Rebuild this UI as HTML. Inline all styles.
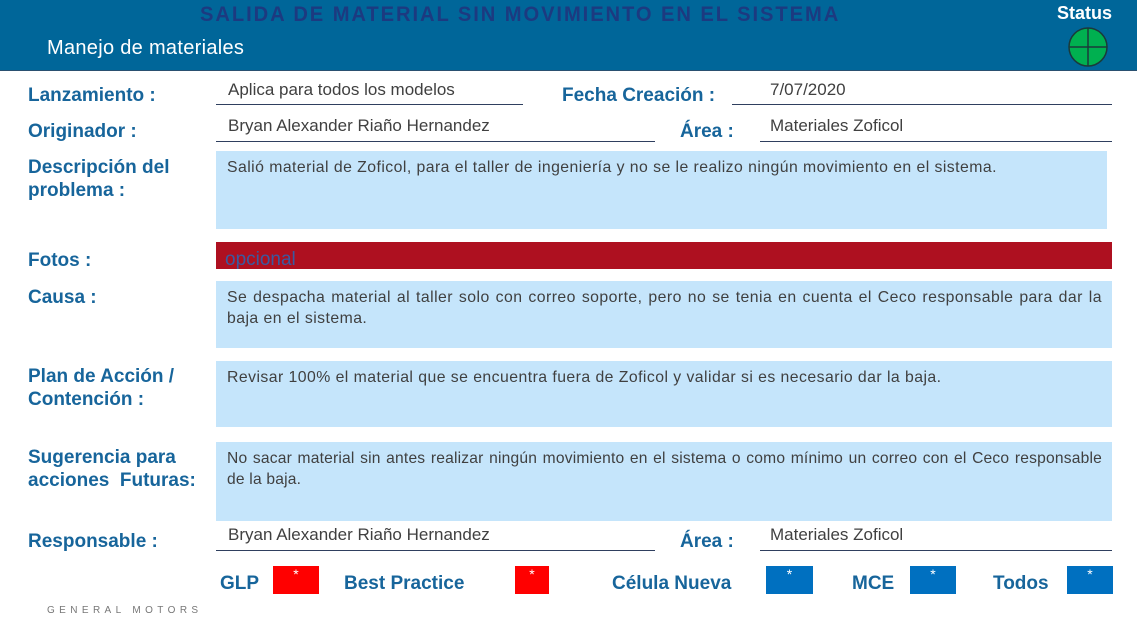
<!DOCTYPE html>
<html><head><meta charset="utf-8"><style>
body{margin:0;width:1137px;height:633px;background:#fff;position:relative;overflow:hidden;font-family:"Liberation Sans",Arial,sans-serif}
.a{position:absolute}
.hdr{left:0;top:0;width:1137px;height:70px;background:#006699;border-bottom:1px solid #2a5070}
.lb{position:absolute;color:#17659b;font-weight:bold;font-size:19px;line-height:23px}
.tx{position:absolute;color:#404040;font-size:17px}
.ln{position:absolute;height:1px;background:#2f3f5f}
.bx{position:absolute;background:#c5e5fb;color:#404040;font-size:15.8px;letter-spacing:0.45px;line-height:21px;padding:6px 10px 0 11px;box-sizing:border-box;text-align:justify}
.sq{position:absolute;color:#fff;font-size:14px;text-align:center;line-height:16px}
</style></head><body>
<div class="a hdr"></div>
<div class="a" style="left:200px;top:3px;font-size:21px;letter-spacing:2px;color:#1c3a80;font-weight:bold;transform:scaleX(0.96);transform-origin:left">SALIDA DE MATERIAL SIN MOVIMIENTO EN EL SISTEMA</div>
<div class="a" style="left:47px;top:37px;font-size:20px;letter-spacing:0.3px;color:#fff">Manejo de materiales</div>
<div class="a" style="left:1057px;top:3px;font-size:18px;color:#fff;font-weight:bold">Status</div>
<svg class="a" style="left:1067px;top:26px" width="42" height="42"><circle cx="21" cy="21" r="19" fill="#00b050" stroke="#1a3a3a" stroke-width="1.5"/><line x1="2" y1="21" x2="40" y2="21" stroke="#1a3a3a" stroke-width="1.5"/><line x1="21" y1="2" x2="21" y2="40" stroke="#1a3a3a" stroke-width="1.5"/></svg>

<div class="lb" style="left:28px;top:84px">Lanzamiento :</div>
<div class="tx" style="left:228px;top:80px">Aplica para todos los modelos</div>
<div class="ln" style="left:216px;top:104px;width:307px"></div>
<div class="lb" style="left:562px;top:84px">Fecha Creación :</div>
<div class="tx" style="left:770px;top:80px">7/07/2020</div>
<div class="ln" style="left:732px;top:104px;width:380px"></div>

<div class="lb" style="left:28px;top:120px">Originador :</div>
<div class="tx" style="left:228px;top:116px">Bryan Alexander Riaño Hernandez</div>
<div class="ln" style="left:216px;top:141px;width:439px"></div>
<div class="lb" style="left:680px;top:120px">Área :</div>
<div class="tx" style="left:770px;top:116px">Materiales Zoficol</div>
<div class="ln" style="left:760px;top:141px;width:352px"></div>

<div class="lb" style="left:28px;top:156px">Descripción del<br>problema :</div>
<div class="bx" style="left:216px;top:151px;width:891px;height:78px">Salió material de Zoficol, para el taller de ingeniería y no se le realizo ningún movimiento en el sistema.</div>

<div class="lb" style="left:28px;top:249px">Fotos :</div>
<div class="a" style="left:216px;top:242px;width:896px;height:27px;background:#ae1020"></div>
<div class="a" style="left:225px;top:249px;font-size:19px;color:#3a5aa0">opcional</div>

<div class="lb" style="left:28px;top:286px">Causa :</div>
<div class="bx" style="left:216px;top:281px;width:896px;height:67px">Se despacha material al taller solo con correo soporte, pero no se tenia en cuenta el Ceco responsable para dar la baja en el sistema.</div>

<div class="lb" style="left:28px;top:365px">Plan de Acción /<br>Contención :</div>
<div class="bx" style="left:216px;top:361px;width:896px;height:66px">Revisar 100% el material que se encuentra fuera de Zoficol y validar si es necesario dar la baja.</div>

<div class="lb" style="left:28px;top:446px">Sugerencia para<br>acciones&nbsp; Futuras:</div>
<div class="bx" style="left:216px;top:442px;width:896px;height:79px;letter-spacing:0.2px;font-size:15.6px">No sacar material sin antes realizar ningún movimiento en el sistema o como mínimo un correo con el Ceco responsable de la baja.</div>

<div class="lb" style="left:28px;top:530px">Responsable :</div>
<div class="tx" style="left:228px;top:525px">Bryan Alexander Riaño Hernandez</div>
<div class="ln" style="left:216px;top:550px;width:439px"></div>
<div class="lb" style="left:680px;top:530px">Área :</div>
<div class="tx" style="left:770px;top:525px">Materiales Zoficol</div>
<div class="ln" style="left:760px;top:550px;width:352px"></div>

<div class="lb" style="left:220px;top:572px">GLP</div>
<div class="sq" style="left:273px;top:566px;width:46px;height:28px;background:#f00">*</div>
<div class="lb" style="left:344px;top:572px">Best Practice</div>
<div class="sq" style="left:515px;top:566px;width:34px;height:28px;background:#f00">*</div>
<div class="lb" style="left:612px;top:572px">Célula Nueva</div>
<div class="sq" style="left:766px;top:566px;width:47px;height:28px;background:#0070c0">*</div>
<div class="lb" style="left:852px;top:572px">MCE</div>
<div class="sq" style="left:910px;top:566px;width:46px;height:28px;background:#0070c0">*</div>
<div class="lb" style="left:993px;top:572px">Todos</div>
<div class="sq" style="left:1067px;top:566px;width:46px;height:28px;background:#0070c0">*</div>

<div class="a" style="left:47px;top:605px;font-size:10px;letter-spacing:4.4px;color:#777">GENERAL MOTORS</div>
</body></html>
